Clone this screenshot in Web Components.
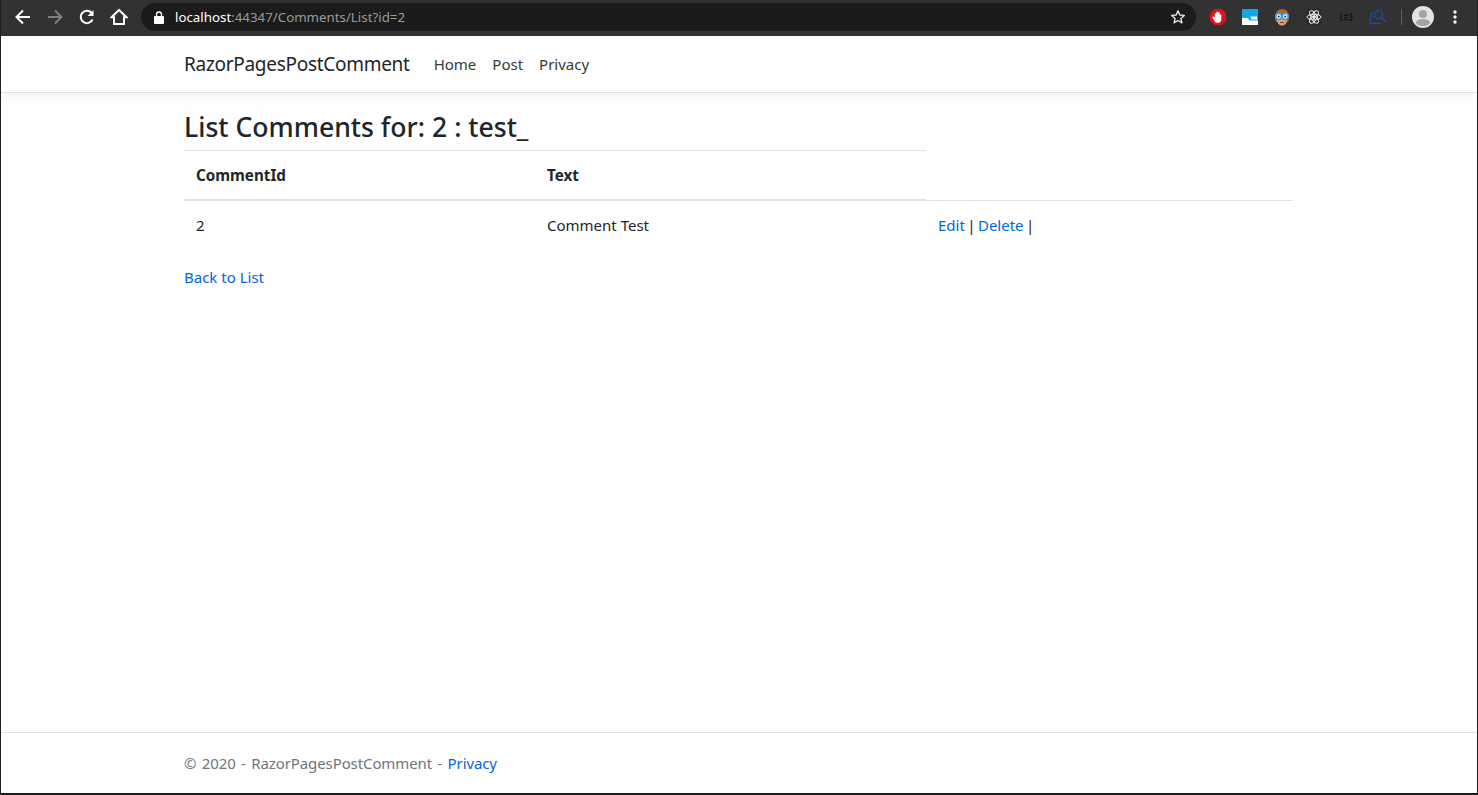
<!DOCTYPE html>
<html><head><meta charset="utf-8">
<style>
html,body{margin:0;padding:0;background:#fff}
body{font-family:"Noto Sans","Open Sans",sans-serif;color:#212529;font-size:16px;line-height:24px}
</style></head><body>
<template id="t-toolbar"><style>
:host{display:flex;align-items:center;height:36px;background:#323232;box-sizing:border-box;flex:none;font-family:"Noto Sans",sans-serif}
.nav{display:flex;width:140px;padding-left:6px;box-sizing:border-box;flex:none;margin-top:-2px}
.btn{width:32px;height:32px;display:flex;align-items:center;justify-content:center;flex:none}
.omni{flex:none;width:1055px;height:28px;margin-top:-2px;background:#1b1b1b;border-radius:14px;display:flex;align-items:center;box-sizing:border-box;padding:0 6px 0 13px;font-size:13.300px;color:#9a9a9a}
.url{flex:1;margin-left:11px;white-space:nowrap}
.url b{font-weight:400;color:#fff}
.ext{display:flex;flex:1;padding-left:6px;align-items:center;margin-top:-2px}
.sep{width:1px;height:16px;background:#5e5e5e;margin:0 5px 0 7px;flex:none}
.fmt{font:700 9px "DejaVu Sans Mono",monospace;color:#111;letter-spacing:-.5px}
</style>
<div class="nav">
<div class="btn"><svg width="18" height="18" viewBox="0 0 18 18" fill="none" stroke="#fff" stroke-width="2"><path d="M16 9H3M9 2.500 2.500 9 9 15.500"/></svg></div>
<div class="btn"><svg width="18" height="18" viewBox="0 0 18 18" fill="none" stroke="#7f7f7f" stroke-width="2"><path d="M2 9h13M9 2.500 15.500 9 9 15.500"/></svg></div>
<div class="btn"><svg width="18" height="18" viewBox="0 0 18 18" fill="none" stroke="#fff" stroke-width="2"><path d="M14.600 11.500A6.200 6.200 0 1 1 13.600 4.800"/><path d="M15.500 2v6h-6z" fill="#fff" stroke="none"/></svg></div>
<div class="btn"><svg width="18" height="18" viewBox="0 0 18 18" fill="none" stroke="#fff" stroke-width="2"><path d="M9 2 1.500 9.300H4V16h10V9.300h2.500z" stroke-linejoin="miter"/></svg></div>
</div>
<div class="omni">
<svg width="10" height="13" viewBox="0 0 10 13"><path d="M1 5h8a1 1 0 0 1 1 1v6a1 1 0 0 1-1 1H1a1 1 0 0 1-1-1V6a1 1 0 0 1 1-1z" fill="#fff"/><path d="M2.500 5.500V3.500a2.500 2.500 0 0 1 5 0v2" fill="none" stroke="#fff" stroke-width="1.300"/></svg>
<div class="url"><b>localhost</b>:44347/Comments/List?id=2</div>
<div class="btn" style="width:24px"><svg width="16" height="16" viewBox="0 0 16 16" fill="none" stroke="#e6e6e6" stroke-width="1.400"><path d="M8 1.800 9.800 6l4.500.4-3.400 3 1 4.400L8 11.500l-3.900 2.300 1-4.400-3.400-3L6.200 6z" stroke-linejoin="round"/></svg></div>
</div>
<div class="ext">
<div class="btn"><svg width="18" height="18" viewBox="0 0 18 18"><path d="M5.400 1h7.200L17 5.400v7.200L12.600 17H5.400L1 12.600V5.400z" fill="#e3101a"/><path d="M5.800 9V5.800a.9.9 0 0 1 1.600 0V9 4a.9.9 0 0 1 1.700 0v5-4.400a.9.900 0 0 1 1.700 0V9 6.800a.8.8 0 0 1 1.500 0V11c0 2.500-1.500 4-3.600 4-1.700 0-2.700-.8-3.300-2.200L3.400 9.800c-.4-1 .9-1.700 1.500-.9z" fill="#fff"/></svg></div>
<div class="btn"><svg width="16" height="16" viewBox="0 0 16 16"><rect width="16" height="16" fill="#12a6ef"/><path d="M0 9h6l1.500 2.500H16V16H0z" fill="#fff"/><path d="M8.500 7.500H15v3H9.500z" fill="#fff"/></svg></div>
<div class="btn"><svg width="16" height="17" viewBox="0 0 16 17"><path d="M1 9C1 3 4 0 8 0s7 3 7 9l-1 4H2z" fill="#a5672c"/><ellipse cx="8" cy="11" rx="5" ry="5.500" fill="#dd9f78"/><circle cx="4.700" cy="7.500" r="2.900" fill="#fff" stroke="#3f9be8" stroke-width="1.500"/><circle cx="11.300" cy="7.500" r="2.900" fill="#fff" stroke="#3f9be8" stroke-width="1.500"/><circle cx="4.700" cy="7.500" r="1" fill="#223"/><circle cx="11.300" cy="7.500" r="1" fill="#223"/><path d="M6 13.500h4" stroke="#8a4a2a" stroke-width="1.200"/></svg></div>
<div class="btn"><svg width="16" height="16" viewBox="0 0 16 16" fill="none" stroke="#f0f0f0" stroke-width="1"><rect width="16" height="16" fill="#2b2b2b" stroke="none"/><ellipse cx="8" cy="8" rx="7" ry="2.800"/><ellipse cx="8" cy="8" rx="7" ry="2.800" transform="rotate(60 8 8)"/><ellipse cx="8" cy="8" rx="7" ry="2.800" transform="rotate(120 8 8)"/><circle cx="8" cy="8" r="1.400" fill="#f0f0f0"/></svg></div>
<div class="btn"><span class="fmt">{≡}</span></div>
<div class="btn"><svg width="18" height="16" viewBox="0 0 18 16" fill="none" stroke="#1e4c9a" stroke-width="1.500"><path d="M4 4H2.500L1 14.500h10.500"/><circle cx="9.500" cy="5.500" r="4"/><path d="M12.500 8.500 17 13"/></svg></div>
<div class="sep"></div>
<div class="btn"><svg width="22" height="22" viewBox="0 0 22 22"><circle cx="11" cy="11" r="11" fill="#e3e3e3"/><circle cx="11" cy="8" r="4" fill="#a3a3a3"/><ellipse cx="11" cy="16.500" rx="7" ry="3.500" fill="#a3a3a3"/></svg></div>
<div class="btn"><svg width="4" height="14" viewBox="0 0 4 14" fill="#f2f2f2"><circle cx="2" cy="2" r="1.700"/><circle cx="2" cy="7" r="1.700"/><circle cx="2" cy="12" r="1.700"/></svg></div>
</div>
</template>

<template id="t-navbar"><style>
:host{display:block;flex:none;height:57px;box-sizing:border-box;border-bottom:1px solid #e1e1e1;box-shadow:0 4px 12px rgba(0,0,0,.05);background:#fff;position:relative}
.wrap{width:1110px;margin-left:183px;display:flex;align-items:center;height:56px}
.brand{font-size:19px;color:#212529;margin-right:16px;letter-spacing:-.29px;white-space:nowrap}
::slotted(a){color:#343a40;text-decoration:none;padding:0 8px;white-space:nowrap;font-size:15px}
</style><div class="wrap"><div class="brand"><slot name="brand"></slot></div><slot></slot></div></template>

<template id="t-comment-table"><style>
:host{display:block}
table{border-collapse:collapse;width:1109px;table-layout:fixed;margin-bottom:16px;font-size:15px}
th,td{padding:12px;text-align:left;vertical-align:top;line-height:24px}
th{border-top:1px solid #dee2e6;border-bottom:2px solid #dee2e6;font-weight:700;font-size:15.200px}
td{border-top:1px solid #dee2e6}
.act{word-spacing:-1.500px}
a{color:#0366d6;text-decoration:none}
</style><table><colgroup><col style="width:351px"><col style="width:391px"><col></colgroup>
<thead><tr><th>CommentId</th><th>Text</th></tr></thead>
<tbody><tr><td>2</td><td>Comment Test</td><td class="act"><a href="#">Edit</a> | <a href="#">Delete</a> |</td></tr></tbody></table></template>

<template id="t-page-main"><style>
:host{display:block;flex:1;padding:18px 0 0 183px;box-sizing:border-box}
h3{margin:0 0 7px;font-size:26.600px;line-height:32px;font-weight:500;color:#212529;white-space:nowrap}
a{color:#0366d6;text-decoration:none;font-size:15px}
</style><h3>List Comments for: 2 : test_</h3><slot></slot><a href="#">Back to List</a></template>

<template id="t-page-footer"><style>
:host{display:block;flex:none;border-top:1px solid #e1e1e1;height:61px;box-sizing:border-box;line-height:60px;padding-left:183px;color:#6c757d;font-size:15px;letter-spacing:-.1px;word-spacing:1.600px;white-space:nowrap}
::slotted(a){color:#0366d6;text-decoration:none}
</style><slot></slot></template>

<template id="t-app-window"><style>
:host{display:flex;flex-direction:column;height:795px;box-sizing:border-box;border-left:1px solid #1e1e1e;border-right:1px solid #1e1e1e;border-bottom:2px solid #1e1e1e;overflow:hidden;background:#fff}
</style><slot></slot></template>

<app-window>
<browser-toolbar></browser-toolbar>
<site-navbar><span slot="brand">RazorPagesPostComment</span><a href="#">Home</a><a href="#">Post</a><a href="#">Privacy</a></site-navbar>
<page-main><comment-table></comment-table></page-main>
<page-footer>© 2020 - RazorPagesPostComment - <a href="#">Privacy</a></page-footer>
</app-window>
<script>
const reg=(name,id)=>customElements.define(name,class extends HTMLElement{constructor(){super();this.attachShadow({mode:"open"}).appendChild(document.getElementById(id).content.cloneNode(true))}});
reg("app-window","t-app-window");reg("browser-toolbar","t-toolbar");reg("site-navbar","t-navbar");reg("comment-table","t-comment-table");reg("page-main","t-page-main");reg("page-footer","t-page-footer");
</script>
</body></html>
